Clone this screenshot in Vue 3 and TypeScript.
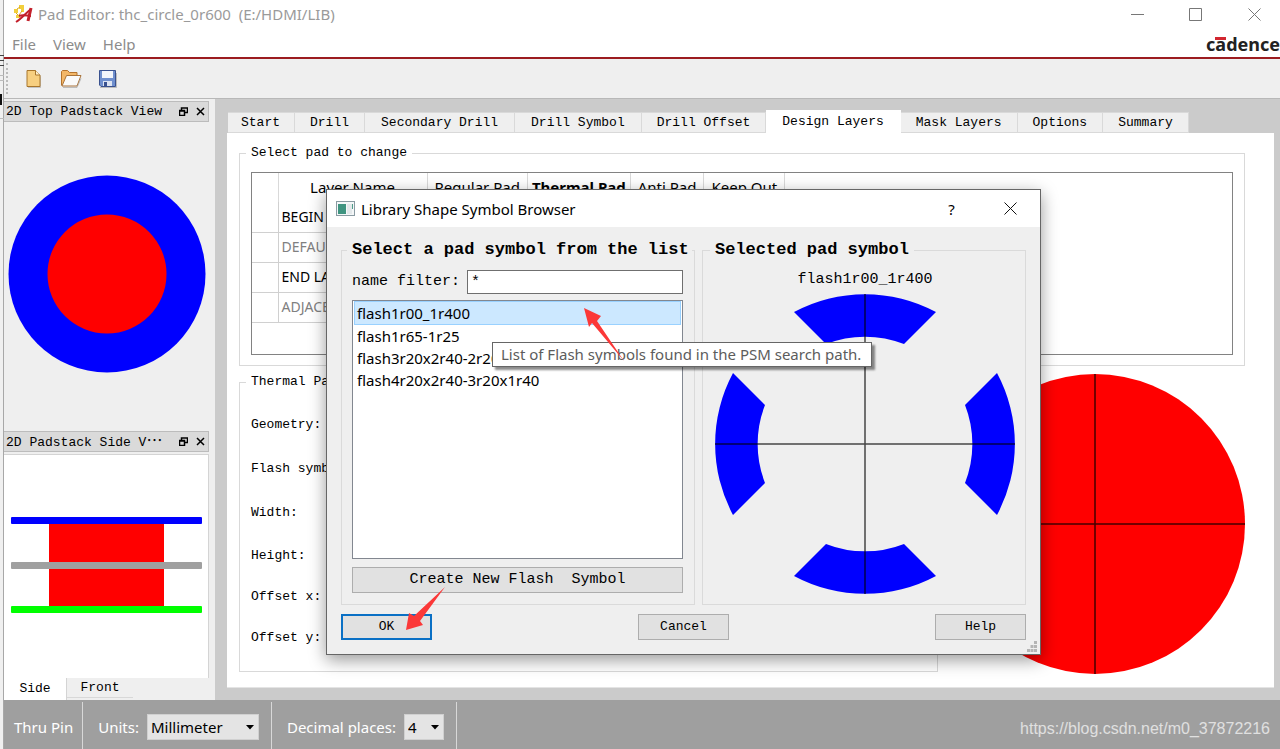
<script setup lang="ts">
import { ref } from 'vue'

const menus = ['File', 'View', 'Help']
const tabs = [
  'Start', 'Drill', 'Secondary Drill', 'Drill Symbol', 'Drill Offset',
  'Design Layers', 'Mask Layers', 'Options', 'Summary',
]
const activeTab = ref('Design Layers')
const padColumns = ['Layer Name', 'Regular Pad', 'Thermal Pad', 'Anti Pad', 'Keep Out']
const layers = [
  { name: 'BEGIN LAYER', dim: false },
  { name: 'DEFAULT INTERNAL', dim: true },
  { name: 'END LAYER', dim: false },
  { name: 'ADJACENT LAYER', dim: true },
]
const fields = ['Geometry:', 'Flash symbol:', 'Width:', 'Height:', 'Offset x:', 'Offset y:']
const symbols = ['flash1r00_1r400', 'flash1r65-1r25', 'flash3r20x2r40-2r20x1r40', 'flash4r20x2r40-3r20x1r40']
const selected = ref(symbols[0])
const filter = ref('*')
const units = ref('Millimeter')
const decimals = ref('4')
const quarterTurns = [0, 90, 180, 270]
</script>

<template>
  <div class="screen">
    <div class="behind" aria-hidden="true">
      <svg width="4" height="130" viewBox="0 0 4 130">
        <path d="M0 55.500h4M0 60.500h4M0 65.500h4" stroke="#444" />
        <path d="M0 75.500h4M0 80.500h4M0 118.500h4" stroke="#bbb" />
        <rect y="94" width="2" height="11" fill="#111" />
      </svg>
    </div>
    <div class="window">
      <header class="titlebar">
        <svg class="app-icon" width="20" height="20" viewBox="0 0 20 20">
          <path d="M6 1h5v4H6zM1 5h4v4H1zM8 5h3v3H8zM3 11h4v3H3z" fill="#f2cf3c" />
          <path d="M4 5l3-2M3 9l2 2M9 7L6 11" stroke="#d8a71f" />
          <path d="M3 18C8 15 12 10 18 5" fill="none" stroke="#c3202b" stroke-width="2" />
          <path d="M18 4L15 17" fill="none" stroke="#c3202b" stroke-width="3" />
          <path d="M6 12C10 10 14 12 18 12" fill="none" stroke="#c3202b" stroke-width="2" />
        </svg>
        <span class="app-title">Pad Editor: thc_circle_0r600&nbsp; (E:/HDMI/LIB)</span>
        <div class="win-buttons">
          <button type="button" aria-label="Minimize"><svg width="13" height="13" viewBox="0 0 13 13"><path d="M0 6.500h13" /></svg></button>
          <button type="button" aria-label="Maximize"><svg width="13" height="13" viewBox="0 0 13 13"><path d="M.5 .5h12v12H.5z" /></svg></button>
          <button type="button" aria-label="Close"><svg width="13" height="13" viewBox="0 0 13 13"><path d="M.5 .5l12 12M12.500 .5l-12 12" /></svg></button>
        </div>
      </header>
      <nav class="menubar">
        <button v-for="m in menus" :key="m" type="button">{{ m }}</button>
        <span class="brand">c<span class="macron">ā</span>dence</span>
      </nav>
      <div class="toolbar">
        <i class="grip"></i>
        <button type="button" aria-label="New">
          <svg width="22" height="22" viewBox="0 0 22 22">
            <path d="M5 3.500h8l5 5V20H5z" fill="#999" opacity=".5" />
            <path d="M4 2.500h8.500l4.500 4.500v11.500H4z" fill="#f7cf80" stroke="#a8762c" />
            <path d="M12.500 2.500V7H17" fill="#fff0cd" stroke="#a8762c" />
          </svg>
        </button>
        <button type="button" aria-label="Open">
          <svg width="22" height="22" viewBox="0 0 22 22">
            <path d="M1.500 17.500v-14l1-1h5l2 2h7.500v3" fill="#f3b768" stroke="#b5732c" />
            <path d="M2 18L6.500 7.500H21L17 18z" fill="#fafafa" stroke="#a9733a" />
            <path d="M3 19.500h14l4-9" fill="none" stroke="#999" opacity=".6" />
          </svg>
        </button>
        <button type="button" aria-label="Save">
          <svg width="22" height="22" viewBox="0 0 22 22">
            <path d="M3 19.500h16.500V5" fill="none" stroke="#999" opacity=".6" />
            <path d="M2.500 2.500h16v16H4l-1.500-1.500z" fill="#6f8fce" stroke="#39518f" />
            <path d="M5 3h11v7H5z" fill="#f2f5fb" />
            <path d="M6 13h9v5H6z" fill="#dde4f2" />
            <path d="M7 14h3v4H7z" fill="#39518f" />
          </svg>
        </button>
      </div>

      <div class="workspace">
        <aside class="dock">
          <div class="dock-title">
            <span class="caption">2D Top Padstack View</span>
            <button type="button" aria-label="Float top view"><svg width="9" height="9" viewBox="0 0 9 9"><path d="M2.500 3V1h6v4.500H6M2 1h7M.5 3.500h5v5h-5zM0 4h6" /></svg></button>
            <button type="button" aria-label="Close top view"><svg width="9" height="9" viewBox="0 0 9 9"><path d="M1 1l7 7M8 1l-7 7" /></svg></button>
          </div>
          <div class="top-view">
            <svg width="198" height="198" viewBox="0 0 198 198">
              <circle cx="99" cy="99" r="98.500" fill="#00f" />
              <circle cx="99" cy="99" r="59.500" fill="#f00" />
            </svg>
          </div>
          <div class="dock-title">
            <span class="caption">2D Padstack Side V<span class="more" lang="zh-CN">…</span></span>
            <button type="button" aria-label="Float side view"><svg width="9" height="9" viewBox="0 0 9 9"><path d="M2.500 3V1h6v4.500H6M2 1h7M.5 3.500h5v5h-5zM0 4h6" /></svg></button>
            <button type="button" aria-label="Close side view"><svg width="9" height="9" viewBox="0 0 9 9"><path d="M1 1l7 7M8 1l-7 7" /></svg></button>
          </div>
          <div class="side-view">
            <svg width="191" height="97" viewBox="0 0 191 97">
              <rect x="38" y="0" width="115" height="92" fill="#f00" />
              <rect y="0" width="191" height="7" rx="1" fill="#00f" />
              <rect y="45" width="191" height="7" rx="1" fill="#a0a0a0" />
              <rect y="89" width="191" height="7" rx="1" fill="#0f0" />
            </svg>
          </div>
          <div class="dock-tabs">
            <button type="button" class="on">Side</button>
            <button type="button">Front</button>
          </div>
        </aside>

        <main class="content">
          <div class="tabs" role="tablist">
            <button
              v-for="t in tabs" :key="t" type="button" role="tab"
              :class="{ on: t === activeTab }" :aria-selected="t === activeTab" @click="activeTab = t"
            >{{ t }}</button>
          </div>
          <section class="pane">
            <fieldset class="group">
              <legend>Select pad to change</legend>
              <div class="table-frame">
                <table>
                  <thead>
                    <tr>
                      <th class="stub"></th>
                      <th v-for="c in padColumns" :key="c" :class="{ bold: c === 'Thermal Pad', first: c === 'Layer Name' }">{{ c }}</th>
                    </tr>
                  </thead>
                  <tbody>
                    <tr v-for="l in layers" :key="l.name">
                      <td></td>
                      <td :class="{ dim: l.dim }">{{ l.name }}</td>
                      <td></td><td></td><td></td><td></td>
                    </tr>
                  </tbody>
                </table>
              </div>
            </fieldset>
            <div class="lower">
              <fieldset class="group pad-form">
                <legend>Thermal Pad</legend>
                <div v-for="f in fields" :key="f" class="field">{{ f }}</div>
              </fieldset>
              <svg class="pad-preview" width="300" height="302" viewBox="0 0 300 302">
                <circle cx="150" cy="152" r="150" fill="#f00" />
                <path d="M0 152h300M150 2v300" stroke="#400" stroke-width="1.500" />
              </svg>
            </div>
          </section>
        </main>
      </div>

      <footer class="status">
        <span class="cell pin">Thru Pin</span>
        <span class="cell">
          <label for="units">Units:</label>
          <span class="combo wide">
            <select id="units" v-model="units"><option>Millimeter</option></select>
            <svg width="8" height="5" viewBox="0 0 8 5"><path d="M0 0h8L4 4.500z" /></svg>
          </span>
        </span>
        <span class="cell">
          <label for="decimals">Decimal places:</label>
          <span class="combo">
            <select id="decimals" v-model="decimals"><option>4</option></select>
            <svg width="8" height="5" viewBox="0 0 8 5"><path d="M0 0h8L4 4.500z" /></svg>
          </span>
        </span>
        <span class="watermark">https://blog.csdn.net/m0_37872216</span>
      </footer>
    </div>

    <div class="dialog" role="dialog" aria-labelledby="dialog-title">
      <header class="dialog-bar">
        <svg width="19" height="15" viewBox="0 0 19 15">
          <rect x=".5" y=".5" width="18" height="14" fill="#f4f7f8" stroke="#8a9ba2" />
          <rect x="2" y="3" width="8" height="10" fill="#3f9480" />
          <rect x="11" y="3" width="5" height="10" fill="#e3e8ea" />
          <path d="M16.500 3v5" stroke="#4f9c8a" />
        </svg>
        <span id="dialog-title">Library Shape Symbol Browser</span>
        <button type="button" class="help-mark">?</button>
        <button type="button" aria-label="Close dialog"><svg width="13" height="13" viewBox="0 0 13 13"><path d="M.5 .5l12 12M12.500 .5l-12 12" stroke="#111" /></svg></button>
      </header>
      <div class="dialog-body">
        <div class="columns">
          <fieldset class="group chooser">
            <legend>Select a pad symbol from the list</legend>
            <div class="filter">
              <label for="filter">name filter:</label>
              <input id="filter" v-model="filter" type="text">
            </div>
            <ul class="list" role="listbox" aria-label="Flash symbols">
              <li
                v-for="s in symbols" :key="s" role="option"
                :aria-selected="s === selected" :class="{ on: s === selected }" @click="selected = s"
              >{{ s }}</li>
            </ul>
            <button type="button" class="push create">Create New Flash&nbsp; Symbol</button>
          </fieldset>
          <fieldset class="group preview">
            <legend>Selected pad symbol</legend>
            <div class="symbol-name">{{ selected }}</div>
            <svg width="300" height="300" viewBox="0 0 300 300">
              <path
                v-for="q in quarterTurns" :key="q" :transform="`rotate(${q} 150 150)`"
                d="M79 18A150 150 0 0 1 221 18L189 50A107 107 0 0 0 111 50Z" fill="#00f"
              />
              <path d="M0 150h300M150 0v300" stroke="#000" stroke-width="1.500" opacity=".7" />
            </svg>
          </fieldset>
        </div>
        <div class="actions">
          <button type="button" class="push default">OK</button>
          <button type="button" class="push">Cancel</button>
          <button type="button" class="push">Help</button>
        </div>
      </div>
      <svg class="size-grip" width="10" height="11" viewBox="0 0 10 11" fill="#b4b4b4">
        <path d="M7 0h3v3H7zM3.500 4h3v3h-3zM7 4h3v3H7zM0 8h3v3H0zM3.500 8h3v3h-3zM7 8h3v3H7z" />
      </svg>
      <div class="tooltip" role="tooltip">List of Flash symbols found in the PSM search path.</div>
      <svg class="arrows" width="713" height="464" viewBox="0 0 713 464" fill="#fb3838">
        <path d="M257 118L274 126L270 131L297 171L265 133L262 137Z" />
        <path d="M79 440L82 423L87 426L118 397L93 431L96 435Z" />
      </svg>
    </div>
  </div>
</template>

<style>
body { margin: 0; overflow: hidden; }
</style>

<style scoped>
* { box-sizing: border-box; }
.screen {
  --ui: "Noto Sans", "Open Sans", sans-serif;
  --mono: "Liberation Mono", "Noto Sans CJK SC", monospace;
  position: relative;
  display: flex;
  min-height: 100vh;
  background: #fff;
  color: #000;
  font: 13px/20px var(--mono);
}
button, input, select { font: inherit; color: inherit; }
button { border: 0; padding: 0; background: none; white-space: nowrap; }
svg { display: block; flex: none; }
.behind { flex: none; width: 4px; background: #f0f0f0; border-right: 1px solid #a8a8a8; }
.window { flex: 1; min-width: 0; display: flex; flex-direction: column; }

.titlebar { display: flex; align-items: center; height: 30px; padding: 0 0 2px 9px; font: 15px/20px var(--ui); color: #9a9a9a; }
.app-title { margin-left: 5px; white-space: nowrap; }
.win-buttons { display: flex; margin-left: auto; }
.win-buttons button { display: grid; place-items: center; width: 58px; height: 28px; }
.win-buttons button:last-child { width: 56px; padding-left: 4px; }
.win-buttons path { fill: none; stroke: #777; }
.menubar { display: flex; align-items: center; gap: 17px; height: 29px; padding: 0 0 0 8px; border-bottom: 2px solid #9c1c20; font: 15px/20px var(--ui); color: #8c8c8c; }
.brand { margin-left: auto; color: #222; font-weight: 700; font-size: 18px; }
.macron { position: relative; }
.macron::after { content: ""; position: absolute; left: 0; right: 0; top: 5px; height: 3px; background: #d22630; }
.toolbar { display: flex; align-items: center; gap: 15px; height: 40px; padding-left: 2px; background: #efefef; border-bottom: 1px solid #b8b8b8; }
.grip { width: 2px; height: 31px; border-left: 2px dotted #bbb; }

.workspace { flex: 1; display: flex; background: #cbcbcb; }
.dock { flex: none; width: 211px; padding: 2px 6px 0 0; display: flex; flex-direction: column; background: #efefef; }
.dock-title { display: flex; align-items: center; height: 21px; padding: 0 3px 0 2px; background: #dadada; border: 1px solid #bcbcbc; border-left: 0; }
.caption { flex: 1; white-space: nowrap; }
.more { font: 16px/18px "Noto Sans CJK SC", sans-serif; }
.dock-title button { margin-left: 8px; }
.dock-title path { fill: none; stroke: #000; stroke-width: 1.5; }
.top-view { flex: 1; display: grid; place-items: center; padding-bottom: 6px; }
.side-view { display: grid; place-items: center; height: 224px; margin-top: 2px; padding-bottom: 2px; background: #fff; border: 1px solid #d4d4d4; border-left: 0; border-bottom: 0; }
.dock-tabs { display: flex; align-items: flex-start; height: 22px; }
.dock-tabs button { width: 66px; height: 20px; border-bottom: 1px solid #d8d8d8; }
.dock-tabs .on { width: 63px; height: 22px; background: #fff; border: 0; border-right: 1px solid #d4d4d4; }

.content { flex: 1; min-width: 0; display: flex; flex-direction: column; padding: 11px 6px 12px 12px; }
.tabs { display: flex; align-items: flex-end; height: 23px; padding-left: 1px; }
.tabs button { height: 21px; padding: 0 16px; background: #efefef; border: 1px solid #d9d9d9; border-left-width: 0; }
.tabs button:nth-child(1) { padding: 0 14px 0 13px; }
.tabs button:nth-child(2), .tabs button:nth-child(n + 7) { padding: 0 15px; }
.tabs button:nth-child(5) { padding: 0 15px; }
.tabs .on { height: 23px; background: #fff; border-color: #fff; }
.pane { flex: 1; padding: 10px 29px 12px 12px; background: #fff; border-bottom: 1px solid #e4e4e4; }
.group { min-width: 0; margin: 0; padding: 9px 11px 10px; border: 1px solid #d9d9d9; }
.group legend { margin-left: -5px; padding: 0 5px; line-height: 20px; white-space: nowrap; }
.table-frame { height: 183px; border: 1px solid #828282; }
table { border-collapse: collapse; font: 15px/20px var(--ui); }
th { height: 29px; padding: 0 7px 2px; border-right: 1px solid #d9d9d9; font-weight: 400; white-space: nowrap; }
th.stub { width: 26px; padding: 0; }
th.first { width: 149px; }
th.bold { font-weight: 700; padding: 0 4px 2px; }
td { height: 30px; padding: 0 3px; border-right: 1px solid #d0d0d0; border-bottom: 1px solid #d0d0d0; font-size: 14px; white-space: nowrap; }
.dim { color: #808080; }
.lower { display: flex; align-items: flex-start; gap: 7px; margin-top: 6px; }
.pad-form { flex: 1; padding: 11px 11px 13px; }
.field { display: flex; align-items: center; height: 44px; }
.field:nth-of-type(n + 4) { height: 41px; }

.status { display: flex; align-items: center; height: 49px; background: #9f9f9f; color: #fff; font: 15px/20px var(--ui); padding-top: 2px; }
.cell { display: flex; align-items: center; gap: 8px; height: 47px; padding: 2px 12px 0 15px; border-right: 1px solid #d8d8d8; white-space: nowrap; }
.cell.pin { padding: 2px 9px 0 10px; }
.combo { position: relative; width: 40px; color: #000; }
.combo.wide { width: 112px; }
.combo select { display: block; width: 100%; height: 26px; padding: 0 3px; appearance: none; background: #e4e4e4; border: 1px solid #d0d0d0; border-radius: 0; }
.combo svg { position: absolute; right: 5px; top: 11px; pointer-events: none; }
.watermark { margin-left: auto; padding: 6px 10px 0 0; font: 16px/20px "Liberation Sans", Arial, sans-serif; color: #e0e0e0; }

.dialog { position: absolute; left: 326px; top: 189px; width: 715px; background: #efefef; border: 1px solid #666; box-shadow: 0 5px 16px rgba(0, 0, 0, .4); }
.dialog-bar { display: flex; align-items: center; height: 37px; padding-left: 9px; background: #fff; font: 15px/20px var(--ui); }
.dialog-bar span { flex: 1; margin-left: 6px; }
.dialog-bar button { display: grid; place-items: center; width: 57px; height: 30px; }
.dialog-bar button:last-child { width: 60px; }
.dialog-body { padding: 13px 14px 14px; }
.columns { display: flex; gap: 7px; }
.dialog .group { border-color: #dadada; }
.dialog legend { font-size: 17px; font-weight: 700; }
.chooser { flex: 1; display: flex; flex-direction: column; padding: 10px 11px 11px 10px; }
.chooser legend { margin-right: -11px; padding: 0 3px 0 5px; }
.filter { display: flex; align-items: center; gap: 7px; font-size: 15px; }
.filter input { flex: 1; min-width: 0; height: 24px; padding: 0 3px; background: #fff; border: 1px solid #6f6f6f; border-radius: 0; }
.list { flex: 1; margin: 6px 0 8px; padding: 0 1px; list-style: none; background: #fff; border: 1px solid #828790; font: 15px/20px var(--ui); }
.list li { padding: 0 2px; border: 1px solid transparent; }
.list .on { padding: 1px 2px; background: #cce8ff; border-color: #99d1ff; }
.push { width: 91px; height: 26px; background: #e1e1e1; border: 1px solid #adadad; }
.push.create { width: 100%; font-size: 15px; }
.push.default { border: 2px solid #0a70c5; }
.preview { width: 324px; padding: 10px 10px 10px 12px; display: flex; flex-direction: column; align-items: center; }
.symbol-name { font-size: 15px; line-height: 20px; margin-bottom: 4px; }
.actions { display: flex; justify-content: space-between; margin-top: 9px; }
.size-grip { position: absolute; right: 3px; bottom: 2px; }
.tooltip { position: absolute; left: 165px; top: 152px; height: 25px; padding: 1px 10px 0 8px; background: #fff; border: 1px solid #666; box-shadow: 3px 3px 2px rgba(0, 0, 0, .45); color: #5c5c5c; font: 15px/20px var(--ui); white-space: nowrap; }
.arrows { position: absolute; left: 0; top: 0; pointer-events: none; }
</style>
